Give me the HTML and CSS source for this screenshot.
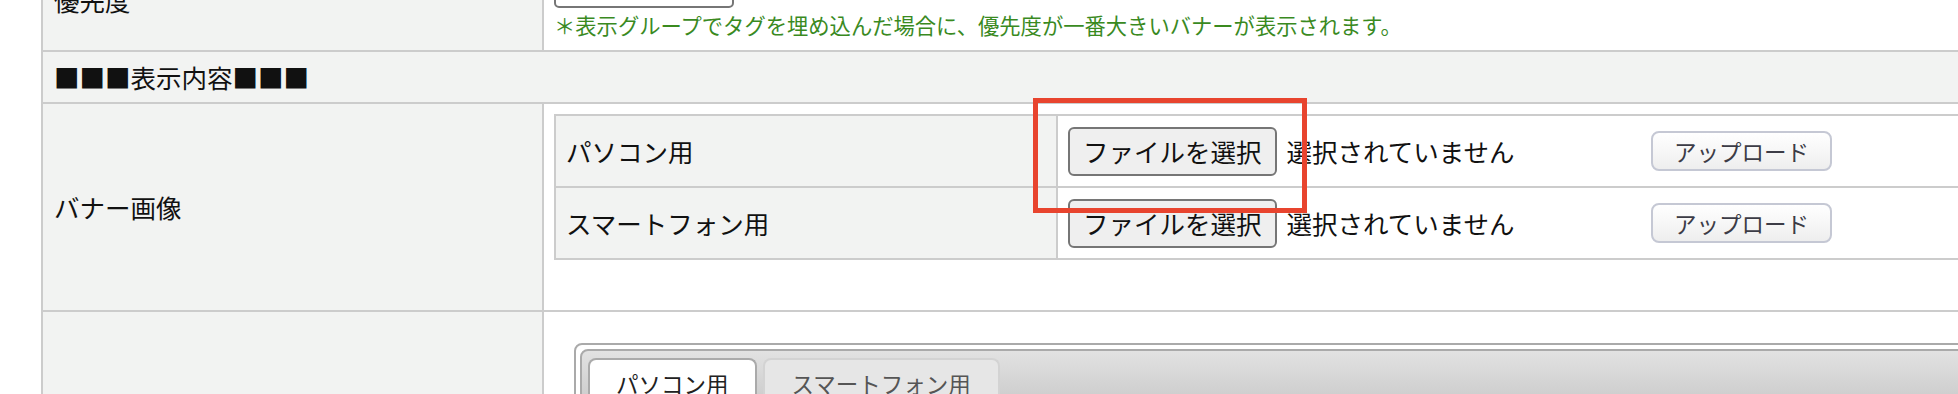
FILE: index.html
```html
<!DOCTYPE html>
<html lang="ja">
<head>
    <meta charset="UTF-8">
    <meta name="viewport" content="width=device-width, initial-scale=1.0">
    <title>バナー編集</title>
    <link rel="stylesheet" href="styles.css">
</head>
<body>
    <div class="form">
        <div class="label">優先度</div>
        <div class="value">
            <input type="text" class="priority" aria-label="優先度">
            <p class="note">＊表示グループでタグを埋め込んだ場合に、優先度が一番大きいバナーが表示されます。</p>
        </div>

        <div class="section">■■■表示内容■■■</div>

        <div class="label">バナー画像</div>
        <div class="value">
            <div class="uploads">
                <div class="up-label">パソコン用</div>
                <div class="up-value">
                    <span class="file"><span class="file-btn">ファイルを選択</span><span>選択されていません</span></span>
                    <button class="upload-btn">アップロード</button>
                </div>
                <div class="up-label">スマートフォン用</div>
                <div class="up-value">
                    <span class="file"><span class="file-btn">ファイルを選択</span><span>選択されていません</span></span>
                    <button class="upload-btn">アップロード</button>
                </div>
            </div>
        </div>

        <div class="label"></div>
        <div class="value">
            <div class="tabs">
                <ul class="tabs-nav">
                    <li class="tab active">パソコン用</li>
                    <li class="tab">スマートフォン用</li>
                </ul>
                <div class="tab-panel"></div>
            </div>
        </div>
    </div>

    <div class="callout"></div>
</body>
</html>
```

FILE: styles.css
```css
* {
    box-sizing: border-box;
}
html, body {
    overflow: hidden;
}
body {
    margin: 0;
    background-color: #fff;
    color: #111;
    font-family: "Noto Sans CJK JP", "Noto Sans", sans-serif;
    font-size: 25.5px;
    line-height: 1.3;
    position: relative;
    height: 394px;
}
.form {
    display: grid;
    grid-template-columns: 501px 1fr;
    width: 1960px;
    margin: -50px 0 0 41px;
    border-left: 2px solid #ccc;
}
.label {
    display: flex;
    align-items: center;
    padding: 0 11px;
    background-color: #f2f3f2;
    border-right: 2px solid #ccc;
    border-bottom: 2px solid #ccc;
}
.value {
    padding: 10px;
    border-bottom: 2px solid #ccc;
    background-color: #fff;
}
.section {
    grid-column: 1 / 3;
    display: flex;
    align-items: center;
    height: 52px;
    padding: 0 11px;
    background-color: #f2f3f2;
    border-bottom: 2px solid #ccc;
}
.priority {
    display: block;
    width: 180px;
    height: 48px;
    border: 2px solid #767676;
    border-radius: 5px;
}
.note {
    margin: 2px 0 0;
    font-size: 21.3px;
    line-height: 30px;
    color: #3a8a1f;
}
.uploads {
    display: grid;
    grid-template-columns: 502px 1fr;
    border-left: 2px solid #ccc;
    border-top: 2px solid #ccc;
    margin-bottom: 40px;
}
.up-label {
    display: flex;
    align-items: center;
    height: 72px;
    padding-left: 10px;
    background-color: #f2f3f2;
    border-right: 2px solid #ccc;
    border-bottom: 2px solid #ccc;
}
.up-value {
    display: flex;
    align-items: center;
    height: 72px;
    padding-left: 10px;
    border-bottom: 2px solid #ccc;
}
.file {
    display: flex;
    align-items: center;
    gap: 10px;
    width: 573px;
}
.file-btn {
    display: inline-flex;
    align-items: center;
    height: 49px;
    padding: 0 13px;
    border: 2px solid #767676;
    border-radius: 6px;
    background-color: #efefef;
}
.upload-btn {
    height: 40px;
    margin-left: 10px;
    padding: 0 21px;
    border: 2px solid #c5c8d4;
    border-radius: 8px;
    background: linear-gradient(#ffffff, #eeeeee);
    color: #3c3c46;
    font-family: inherit;
    font-size: 22.5px;
    line-height: 1;
}
.tabs {
    margin: 21px 0 0 20px;
    padding: 4px;
    border: 2px solid #aaa;
    border-radius: 8px;
}
.tabs-nav {
    display: flex;
    gap: 6px;
    margin: 0;
    padding: 6px 6px 0;
    list-style: none;
    border: 2px solid #aaa;
    border-radius: 8px;
    background: linear-gradient(#e2e2e2, #c9c9c9);
}
.tab {
    margin-top: 1px;
    padding: 9px 27px;
    font-size: 22.5px;
    line-height: 29px;
    color: #555;
    background-color: #e6e6e6;
    border: 2px solid #d3d3d3;
    border-bottom: none;
    border-radius: 8px 8px 0 0;
}
.tab.active {
    padding: 9px 26px;
    color: #212121;
    background-color: #fff;
    border-color: #aaa;
}
.tab-panel {
    height: 200px;
}
.callout {
    position: absolute;
    left: 1033px;
    top: 98px;
    width: 274px;
    height: 115px;
    border: 5px solid #e8442e;
}
```
